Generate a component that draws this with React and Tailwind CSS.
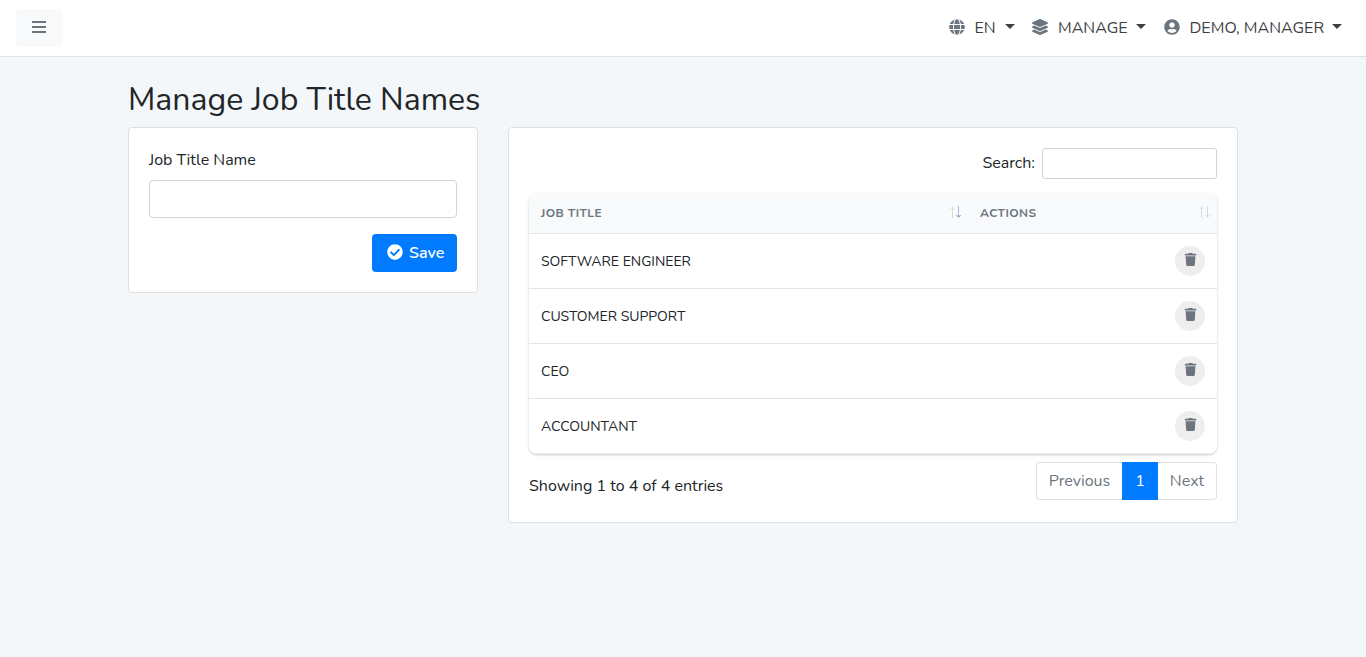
import React from "react";
import { FaGlobe, FaLayerGroup, FaUserCircle, FaCheckCircle, FaTrash } from "react-icons/fa";

const titles = ["SOFTWARE ENGINEER", "CUSTOMER SUPPORT", "CEO", "ACCOUNTANT"];

function Caret() {
  return <span className="mt-[-4px] h-0 w-0 border-x-[5px] border-t-[5px] border-x-transparent border-t-[#3d4045]" />;
}

function NavItem({ icon: Icon, label, width }) {
  return (
    <button className="flex items-center text-[#3d4045]">
      <Icon className="mr-[10px] mt-[-2px] size-4 shrink-0 text-[#6c757d]" />
      <span className={`${width} mr-2 whitespace-nowrap text-left`}>{label}</span>
      <Caret />
    </button>
  );
}

function SortArrows({ active }) {
  return (
    <svg className="mt-[-2px]" width="14" height="14" viewBox="0 0 14 14" fill="none" strokeWidth="1">
      <path d="M4.5 13V2M2.5 4.2L4.5 2L6.5 4.2" stroke="#d9dbde" />
      <path d="M10.5 1V12" stroke={active ? "#b0b3e0" : "#d9dbde"} />
      <path d="M8.5 10L10.5 12.2L12.5 10" stroke={active ? "#85889a" : "#d0d2d5"} />
    </svg>
  );
}

export default function App() {
  return (
    <div className="min-h-screen bg-[#f3f7fa] font-['Nunito',sans-serif] text-base font-normal text-[#212529]">
      <nav className="flex h-[57px] items-center justify-between border-b border-[#dee2e6] bg-white pl-4 pr-6">
        <button className="flex h-[38px] w-[46px] items-center justify-center rounded bg-[#f8f9fa] text-[#6c757d]">
          <svg className="mt-[-2px]" width="14" height="12" viewBox="0 0 14 12" fill="currentColor">
            <path d="M0 0H14V2H0ZM0 5H14V7H0ZM0 10H14V12H0Z" />
          </svg>
        </button>
        <div className="flex items-center gap-[17.5px]">
          <NavItem icon={FaGlobe} label="EN" width="w-[22px]" />
          <NavItem icon={FaLayerGroup} label="MANAGE" width="w-[70px]" />
          <NavItem icon={FaUserCircle} label="DEMO, MANAGER" width="w-[134.5px]" />
        </div>
      </nav>

      <main className="mx-auto w-[1110px] pt-[23px]">
        <h1 className="mb-2 h-[39px] text-[32px] font-normal leading-[39px]">Manage Job Title Names</h1>
        <div className="flex items-start gap-[30px]">
          <section className="h-[166px] w-[350px] rounded border border-[#dfdfdf] bg-white p-5">
            <label htmlFor="job" className="mb-2 block h-6 leading-6">Job Title Name</label>
            <input id="job" className="block h-[38px] w-full rounded border border-[#ced4da] bg-white px-3" />
            <div className="mt-4 flex justify-end">
              <button className="flex h-[38px] w-[85px] items-center rounded bg-[#007bff] pl-[15px] font-semibold text-white">
                <FaCheckCircle className="mr-[6px] mt-[-2px] size-4" />
                <span>Save</span>
              </button>
            </div>
          </section>

          <section className="h-[396px] w-[730px] rounded border border-[#dfdfdf] bg-white p-5">
            <label className="flex h-[31px] items-center justify-end">
              <span className="mr-[7px] mt-[-2px]">Search:</span>
              <input className="h-[31px] w-[175px] rounded-[3px] border border-[#ced4da] bg-white px-2" />
            </label>
            <div className="mt-[14px] overflow-hidden rounded-lg shadow-[0_1px_3px_rgba(0,0,0,0.1),0_1px_2px_rgba(0,0,0,0.12)]">
              <div className="flex h-[41px] items-center border-b border-[#e2e5e8] bg-[#f8fafc] text-xs font-bold tracking-[0.4px] text-[#6c757d]">
                <div className="flex w-[439px] items-center justify-between pl-3 pr-[6px]">
                  <span>JOB TITLE</span>
                  <SortArrows active />
                </div>
                <div className="flex flex-1 items-center justify-between pl-3 pr-[6px]">
                  <span>ACTIONS</span>
                  <SortArrows />
                </div>
              </div>
              {titles.map((t) => (
                <div key={t} className="flex h-[55px] items-center justify-between border-b border-[#e2e5e8] px-3 text-sm last:border-b-[#eceeef]">
                  <span className="pt-[2px]">{t}</span>
                  <button className="flex size-[30px] items-center justify-center rounded-full bg-[#eeeeee] text-[#6c757d]">
                    <FaTrash className="mt-[-3px] size-[13px]" />
                  </button>
                </div>
              ))}
            </div>
            <div className="mt-[8px] flex justify-between">
              <span className="pt-[12px] leading-6">Showing 1 to 4 of 4 entries</span>
              <div className="flex h-[38px] text-[#6c757d]">
                <button className="w-[86px] rounded-l border border-r-0 border-[#dee2e6]">Previous</button>
                <button className="w-9 bg-[#007bff] text-white">1</button>
                <button className="w-[59px] rounded-r border border-l-0 border-[#dee2e6]">Next</button>
              </div>
            </div>
          </section>
        </div>
      </main>
    </div>
  );
}
